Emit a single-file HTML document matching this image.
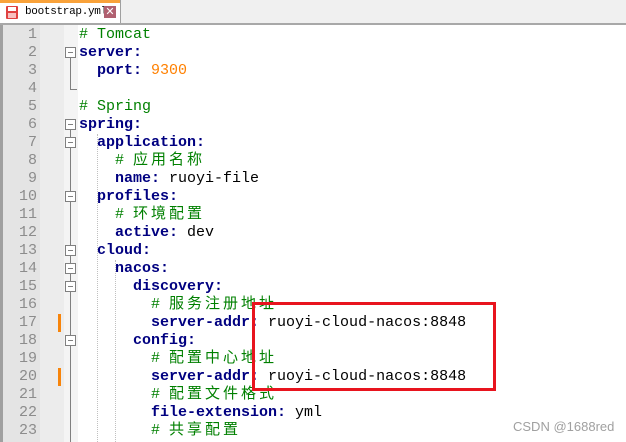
<!DOCTYPE html><html><head><style>
body{margin:0;width:626px;height:442px;overflow:hidden;background:#fff;position:relative;font-family:"Liberation Mono","Noto Sans CJK SC",monospace}
.tabbar{position:absolute;left:0;top:0;width:626px;height:23px;background:#f0f0f0;border-bottom:2px solid #a8a8a8}
.tab{position:absolute;left:0;top:0;width:120px;height:23px;background:#fff;border-right:1px solid #a0a0a0}
.tab .or{height:3px;background:#f9a23a}
.gut1{position:absolute;left:0;top:25px;width:3px;height:417px;background:#a0a0a0}
.gut2{position:absolute;left:3px;top:25px;width:37px;height:417px;background:#e4e4e4}
.gut3{position:absolute;left:40px;top:25px;width:24px;height:417px;background:#ececec}
.gut4{position:absolute;left:64px;top:25px;width:14px;height:417px;background:#f4f4f4}
.ln{position:absolute;left:3px;width:34px;text-align:right;font-size:15px;color:#8c8c8c;line-height:18px}
.l{position:absolute;left:79px;font-size:15px;line-height:18px;white-space:pre;color:#000}
.k{color:#000080;font-weight:bold}.c{color:#008000}.n{color:#ff8000}
.z{letter-spacing:3px}
.fb{position:absolute;left:65px;width:9px;height:9px;border:1px solid #808080;background:#fff}
.fb:after{content:"";position:absolute;left:2px;top:4px;width:5px;height:1px;background:#808080}
.vl{position:absolute;left:70px;width:1px;background:#808080}
.ig{position:absolute;width:0;border-left:1px dotted #c0c0c0}
</style></head><body>
<div class="tabbar"><div class="tab"><div class="or"></div>
<div style="position:absolute;left:6px;top:6px;width:12px;height:13px;background:#e04040;border-radius:1px"><div style="position:absolute;left:2px;top:1px;width:8px;height:4px;background:#fff"></div><div style="position:absolute;left:2px;top:7px;width:8px;height:5px;background:#f8c0c0"></div></div>
<div style="position:absolute;left:25px;top:6px;font-size:11px;letter-spacing:-0.3px;color:#000">bootstrap.yml</div>
<div style="position:absolute;left:104px;top:6px;width:12px;height:12px;background:#b06070;color:#fff;font-size:11px;line-height:12px;text-align:center;font-family:'Liberation Sans'">✕</div>
</div></div>
<div class="gut1"></div><div class="gut2"></div><div class="gut3"></div><div class="gut4"></div>
<div style="position:absolute;left:58px;top:314px;width:3px;height:18px;background:#f7840b"></div>
<div style="position:absolute;left:58px;top:368px;width:3px;height:18px;background:#f7840b"></div>
<div class="vl" style="top:56px;height:34px"></div><div style="position:absolute;left:70px;top:89px;width:7px;height:1px;background:#808080"></div>
<div class="vl" style="top:128px;height:314px"></div>
<div class="ig" style="left:115px;top:260px;height:182px"></div>
<div class="ig" style="left:97px;top:134px;height:308px"></div>
<div id="lines"></div>
<div style="position:absolute;left:252px;top:302px;width:238px;height:83px;border:3px solid #e8141e"></div>
<div style="position:absolute;left:513px;top:419px;font-family:'Liberation Sans';font-size:13px;color:#a0a0a0">CSDN @1688red</div>
<script>
var L=[['<span class="c"># Tomcat</span>',0],['<span class="k">server</span><span class="k">:</span>',1],['  <span class="k">port:</span> <span class="n">9300</span>',0],['',0],['<span class="c"># Spring</span>',0],['<span class="k">spring:</span>',1],['  <span class="k">application:</span>',1],['    <span class="c"># <span class="z">应用名称</span></span>',0],['    <span class="k">name:</span> ruoyi-file',0],['  <span class="k">profiles:</span>',1],['    <span class="c"># <span class="z">环境配置</span></span>',0],['    <span class="k">active:</span> dev',0],['  <span class="k">cloud:</span>',1],['    <span class="k">nacos:</span>',1],['      <span class="k">discovery:</span>',1],['        <span class="c"># <span class="z">服务注册地址</span></span>',0],['        <span class="k">server-addr:</span> ruoyi-cloud-nacos:8848',0],['      <span class="k">config:</span>',1],['        <span class="c"># <span class="z">配置中心地址</span></span>',0],['        <span class="k">server-addr:</span> ruoyi-cloud-nacos:8848',0],['        <span class="c"># <span class="z">配置文件格式</span></span>',0],['        <span class="k">file-extension:</span> yml',0],['        <span class="c"># <span class="z">共享配置</span></span>',0]];
var h='';L.forEach(function(a,i){var t=26+i*18;h+='<div class="ln" style="top:'+(t)+'px">'+(i+1)+'</div><div class="l" style="top:'+t+'px">'+a[0]+'</div>';if(a[1])h+='<div class="fb" style="top:'+(t+3)+'px"></div>';});
document.getElementById('lines').innerHTML=h;
</script>
</body></html>
